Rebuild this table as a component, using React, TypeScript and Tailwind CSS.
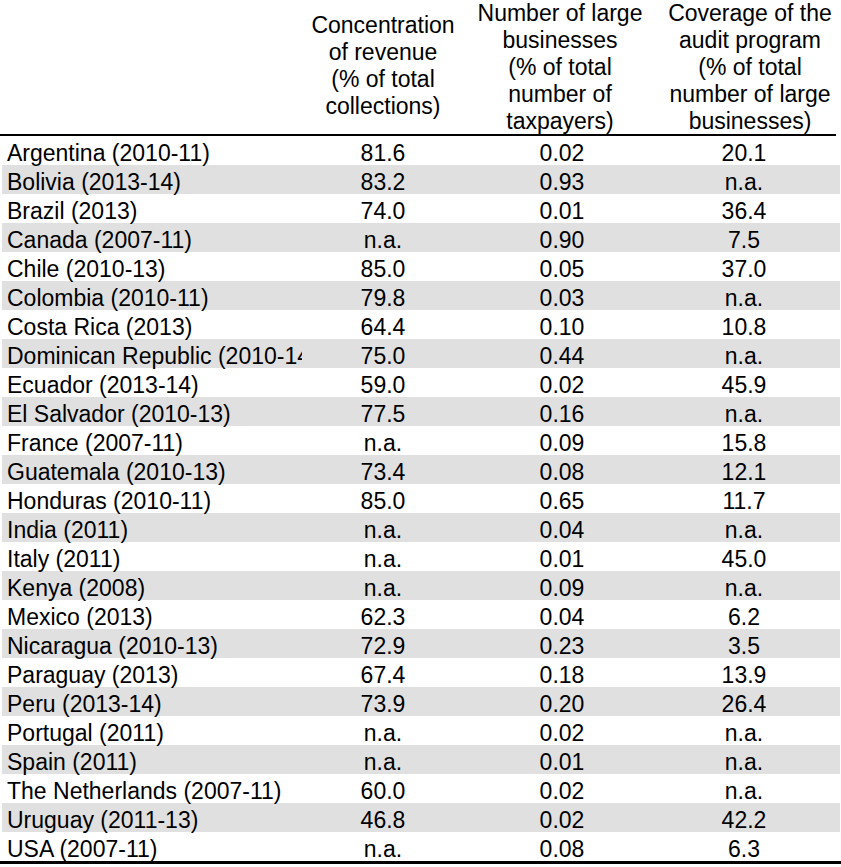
const rows: [string, string, string, string][] = [
  ["Argentina (2010-11)", "81.6", "0.02", "20.1"],
  ["Bolivia (2013-14)", "83.2", "0.93", "n.a."],
  ["Brazil (2013)", "74.0", "0.01", "36.4"],
  ["Canada (2007-11)", "n.a.", "0.90", "7.5"],
  ["Chile (2010-13)", "85.0", "0.05", "37.0"],
  ["Colombia (2010-11)", "79.8", "0.03", "n.a."],
  ["Costa Rica (2013)", "64.4", "0.10", "10.8"],
  ["Dominican Republic (2010-14)", "75.0", "0.44", "n.a."],
  ["Ecuador (2013-14)", "59.0", "0.02", "45.9"],
  ["El Salvador (2010-13)", "77.5", "0.16", "n.a."],
  ["France (2007-11)", "n.a.", "0.09", "15.8"],
  ["Guatemala (2010-13)", "73.4", "0.08", "12.1"],
  ["Honduras (2010-11)", "85.0", "0.65", "11.7"],
  ["India (2011)", "n.a.", "0.04", "n.a."],
  ["Italy (2011)", "n.a.", "0.01", "45.0"],
  ["Kenya (2008)", "n.a.", "0.09", "n.a."],
  ["Mexico (2013)", "62.3", "0.04", "6.2"],
  ["Nicaragua (2010-13)", "72.9", "0.23", "3.5"],
  ["Paraguay (2013)", "67.4", "0.18", "13.9"],
  ["Peru (2013-14)", "73.9", "0.20", "26.4"],
  ["Portugal (2011)", "n.a.", "0.02", "n.a."],
  ["Spain (2011)", "n.a.", "0.01", "n.a."],
  ["The Netherlands (2007-11)", "60.0", "0.02", "n.a."],
  ["Uruguay (2011-13)", "46.8", "0.02", "42.2"],
  ["USA (2007-11)", "n.a.", "0.08", "6.3"],
];

export default function App() {
  return (
    <div
      className="w-[841px] h-[867px] bg-white text-black text-[23px] overflow-hidden"
      style={{ fontFamily: '"Liberation Sans", Arial, sans-serif' }}
    >
      {/* header */}
      <div className="grid grid-cols-[302px_162px_192px_1fr] h-[136px] border-b-2 border-black mr-[5px] leading-[27px] text-center">
        <div />
        <div className="flex flex-col justify-center pb-[4px]">
          <span>Concentration</span>
          <span>of revenue</span>
          <span>(% of total</span>
          <span>collections)</span>
        </div>
        <div className="flex flex-col">
          <span>Number of large</span>
          <span>businesses</span>
          <span>(% of total</span>
          <span>number of</span>
          <span>taxpayers)</span>
        </div>
        <div className="flex flex-col pl-[8px]">
          <span>Coverage of the</span>
          <span>audit program</span>
          <span>(% of total</span>
          <span>number of large</span>
          <span>businesses)</span>
        </div>
      </div>

      {/* body */}
      <div className="pl-[2px] pr-[1px] border-b-[3px] border-black">
        {rows.map(([country, rev, num, cov], i) => (
          <div
            key={country}
            className={`grid grid-cols-[300px_162px_192px_1fr] h-[29px] items-center ${
              i % 2 === 1 ? "bg-[#e0e0e0]" : ""
            }`}
          >
            <div className="pl-[5px] whitespace-nowrap overflow-hidden">{country}</div>
            <div className="text-center">{rev}</div>
            <div className="text-center pl-[4px]">{num}</div>
            <div className="text-center pr-[8px]">{cov}</div>
          </div>
        ))}
      </div>
    </div>
  );
}
